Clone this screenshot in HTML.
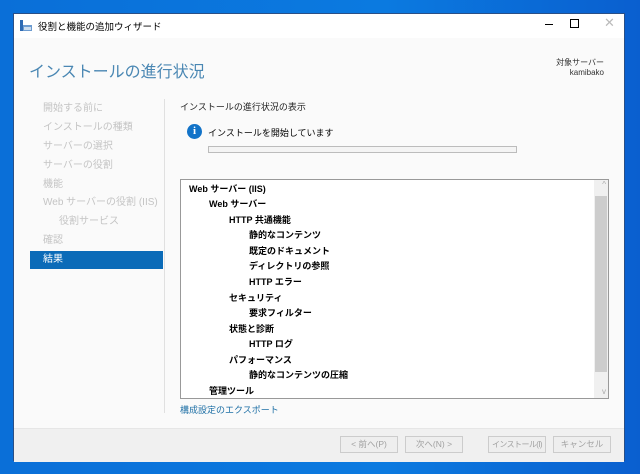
<!DOCTYPE html>
<html><head><meta charset="utf-8"><style>
body{margin:0;width:640px;height:474px;overflow:hidden;background:linear-gradient(90deg,#0a6fd8,#0b7ae0 60%,#0a5fcf);font-family:"Liberation Sans","Noto Sans CJK JP",sans-serif;font-size:9px;color:#000;position:relative}
.win{position:absolute;left:13px;top:13px;width:612px;height:448px;background:#fff;border:1px solid #2a4f86;box-sizing:border-box}
.a{position:absolute;white-space:nowrap}
.nav{position:absolute;left:16px;width:133px;height:18px;line-height:18px;padding-left:13px;box-sizing:border-box;color:#c4c4c4;font-size:10px}
.tree div{position:absolute;white-space:nowrap;font-weight:bold;font-size:9px}
.btn{position:absolute;top:422px;width:58px;height:17px;border:1px solid #ccc;background:#eee;color:#a0a0a0;text-align:center;line-height:15px;font-size:8.5px;box-sizing:border-box;white-space:nowrap;overflow:hidden}
</style></head><body>
<div class="win">
 <svg class="a" style="left:6px;top:6px" width="12" height="11"><rect x="0" y="0" width="3" height="11" fill="#2d6ab3"/><rect x="3" y="5" width="9" height="6" fill="#6c9bd0"/><rect x="4" y="7" width="7" height="3" fill="#cde"/></svg>
 <div class="a" style="left:24px;top:5px;font-size:9.5px">役割と機能の追加ウィザード</div>
 <div class="a" style="left:531px;top:10px;width:8px;height:1px;background:#000"></div>
 <div class="a" style="left:556px;top:5px;width:7px;height:7px;border:1px solid #000"></div>
 <div class="a" style="left:590px;top:1px;color:#bbb;font-size:13px">✕</div>
 <div class="a" style="left:0;top:24px;width:610px;height:390px;background:#fafafa"></div>
 <div class="a" style="left:15px;top:44px;font-size:16px;color:#4a87b3">インストールの進行状況</div>
 <div class="a" style="left:530px;top:44px;font-size:8px;color:#333;text-align:right;width:60px;line-height:10px">対象サーバー<br>kamibako</div>
 <div class="nav" style="top:86px">開始する前に</div>
 <div class="nav" style="top:105px">インストールの種類</div>
 <div class="nav" style="top:124px">サーバーの選択</div>
 <div class="nav" style="top:143px">サーバーの役割</div>
 <div class="nav" style="top:162px">機能</div>
 <div class="nav" style="top:180px">Web サーバーの役割 (IIS)</div>
 <div class="nav" style="top:199px;padding-left:29px">役割サービス</div>
 <div class="nav" style="top:218px">確認</div>
 <div class="nav" style="top:237px;background:#0b6bb8;color:#fff">結果</div>
 <div class="a" style="left:150px;top:85px;width:1px;height:314px;background:#e0e0e0"></div>
 <div class="a" style="left:166px;top:86px;font-size:9px;color:#222">インストールの進行状況の表示</div>
 <div class="a" style="left:173px;top:110px;width:15px;height:15px;border-radius:50%;background:#1273c8;color:#fff;font-weight:bold;font-size:11px;text-align:center;line-height:15px;font-family:'Liberation Serif',serif">i</div>
 <div class="a" style="left:194px;top:112px;font-size:9px">インストールを開始しています</div>
 <div class="a" style="left:194px;top:132px;width:307px;height:5px;border:1px solid #bcbcbc;background:#f4f4f4"></div>
 <div class="a" style="left:166px;top:165px;width:429px;height:220px;border:1px solid #999;background:#fff;box-sizing:border-box">
  <div class="a" style="right:0;top:0;width:14px;height:218px;background:#f0f0f0"></div>
  <div class="a" style="right:1px;top:16px;width:12px;height:176px;background:#cdcdcd"></div>
  <div class="a" style="right:2px;top:0;color:#aaa;font-size:8px">^</div>
  <div class="a" style="right:2px;bottom:2px;color:#aaa;font-size:8px">v</div>
  <div class="tree">
   <div style="left:8px;top:2px">Web サーバー (IIS)</div>
   <div style="left:28px;top:17px">Web サーバー</div>
   <div style="left:48px;top:33px">HTTP 共通機能</div>
   <div style="left:68px;top:48px">静的なコンテンツ</div>
   <div style="left:68px;top:64px">既定のドキュメント</div>
   <div style="left:68px;top:79px">ディレクトリの参照</div>
   <div style="left:68px;top:95px">HTTP エラー</div>
   <div style="left:48px;top:111px">セキュリティ</div>
   <div style="left:68px;top:126px">要求フィルター</div>
   <div style="left:48px;top:142px">状態と診断</div>
   <div style="left:68px;top:157px">HTTP ログ</div>
   <div style="left:48px;top:173px">パフォーマンス</div>
   <div style="left:68px;top:188px">静的なコンテンツの圧縮</div>
   <div style="left:28px;top:204px">管理ツール</div>
  </div>
 </div>
 <div class="a" style="left:166px;top:389px;color:#1d6fa5;font-size:9px">構成設定のエクスポート</div>
 <div class="a" style="left:0;top:414px;width:610px;height:33px;background:#f0f0f0;border-top:1px solid #e6e6e6"></div>
 <div class="btn" style="left:326px">&lt; 前へ(P)</div>
 <div class="btn" style="left:391px">次へ(N) &gt;</div>
 <div class="btn" style="left:474px;letter-spacing:-0.6px;font-size:8px">インストール(I)</div>
 <div class="btn" style="left:539px">キャンセル</div>
</div>
</body></html>
